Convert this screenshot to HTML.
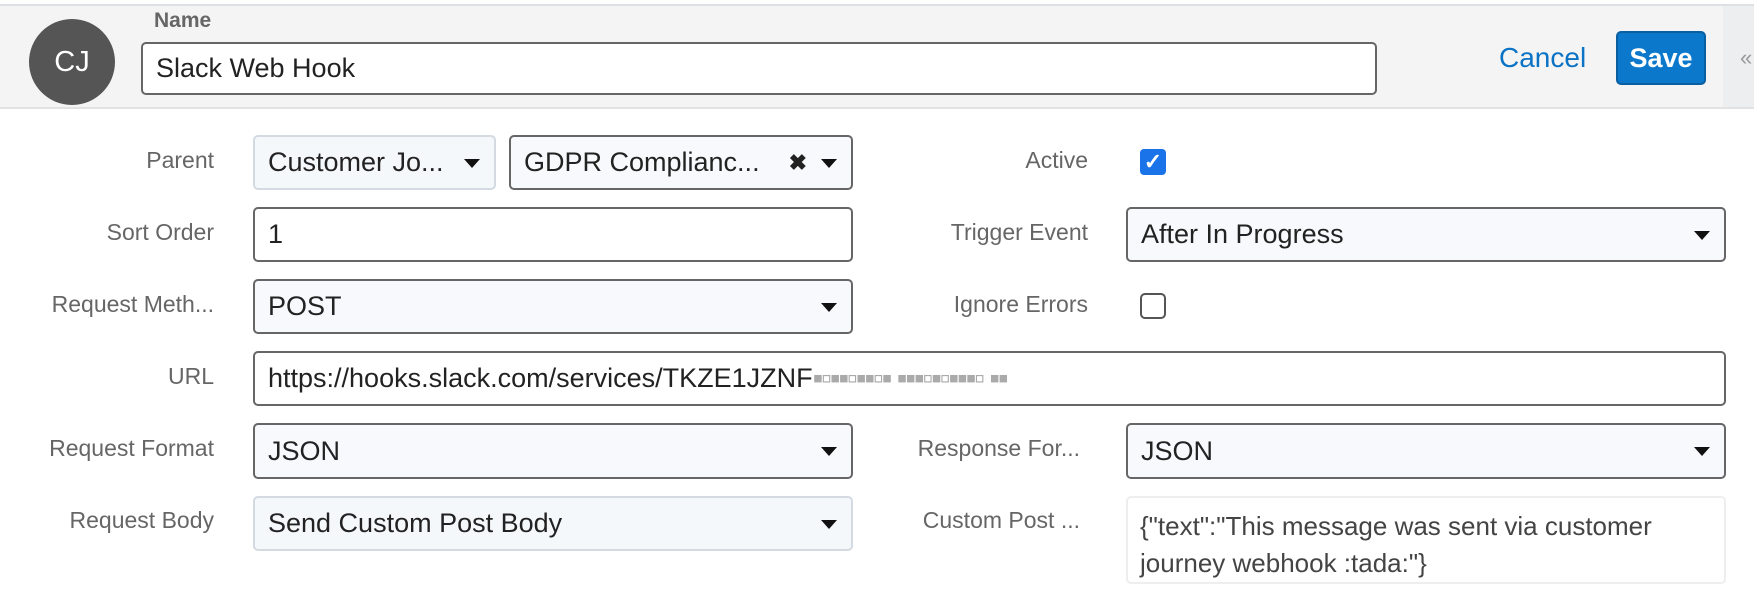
<!DOCTYPE html>
<html><head><style>
*{box-sizing:border-box;margin:0;padding:0}
body{width:1754px;height:602px;background:#fff;font-family:"Liberation Sans",sans-serif;position:relative;overflow:hidden}
.a{position:absolute}
.top{left:0;top:0;width:1754px;height:6px;background:#fff;border-bottom:2px solid #dde1e5}
.hdr{left:0;top:6px;width:1723px;height:103px;background:#f4f4f4;border-bottom:2px solid #e2e2e2}
.rs{left:1723px;top:6px;width:31px;height:103px;background:#eceeef;border-bottom:2px solid #e2e2e2}
.av{left:29px;top:19px;width:86px;height:86px;border-radius:50%;background:#555;color:#fff;font-size:29px;line-height:86px;text-align:center}
.in{border:2px solid #666;border-radius:5px;background:#fff;font-size:27px;color:#222;padding-left:13px;display:flex;align-items:center}
.sel{background:#f8f9fc}
.lite{border-color:#d3dae2;background:#f5f8fb}
.lbl{font-size:23px;color:#666;text-align:right;width:300px}
.arr{position:absolute;right:14px;top:50%;margin-top:-4px;width:0;height:0;border-left:8px solid transparent;border-right:8px solid transparent;border-top:9px solid #111}
</style></head><body>
<div class="a top"></div>
<div class="a hdr"></div>
<div class="a rs"></div>
<div class="a" style="left:1740px;top:45px;font-size:22px;color:#999">«</div>
<div class="a av">CJ</div>
<div class="a" style="left:154px;top:9px;font-size:21px;color:#666;font-weight:bold">Name</div>
<div class="a in" style="left:141px;top:42px;width:1236px;height:53px">Slack Web Hook</div>
<div class="a" style="left:1499px;top:42px;font-size:28px;color:#0b72c4">Cancel</div>
<div class="a" style="left:1616px;top:31px;width:90px;height:54px;background:#0b78cc;border:2px solid #0a5fa0;border-radius:5px;color:#fff;font-weight:bold;font-size:27px;text-align:center;line-height:50px">Save</div>

<div class="a lbl" style="left:-86px;top:147px">Parent</div>
<div class="a in sel lite" style="left:253px;top:135px;width:243px;height:55px">Customer Jo...<span class="arr"></span></div>
<div class="a in sel" style="left:509px;top:135px;width:344px;height:55px">GDPR Complianc...<span style="position:absolute;right:44px;font-size:22px;font-weight:bold">✖</span><span class="arr"></span></div>
<div class="a lbl" style="left:788px;top:147px">Active</div>
<div class="a" style="left:1140px;top:149px;width:26px;height:26px;border-radius:4px;background:#1a73e8;color:#fff;font-size:22px;text-align:center;line-height:26px;font-weight:bold">✓</div>

<div class="a lbl" style="left:-86px;top:219px">Sort Order</div>
<div class="a in" style="left:253px;top:207px;width:600px;height:55px">1</div>
<div class="a lbl" style="left:788px;top:219px">Trigger Event</div>
<div class="a in sel" style="left:1126px;top:207px;width:600px;height:55px">After In Progress<span class="arr"></span></div>

<div class="a lbl" style="left:-86px;top:291px">Request Meth...</div>
<div class="a in sel" style="left:253px;top:279px;width:600px;height:55px">POST<span class="arr"></span></div>
<div class="a lbl" style="left:788px;top:291px">Ignore Errors</div>
<div class="a" style="left:1140px;top:293px;width:26px;height:26px;border-radius:5px;border:2px solid #555;background:#fff"></div>

<div class="a lbl" style="left:-86px;top:363px">URL</div>
<div class="a in" style="left:253px;top:351px;width:1473px;height:55px">https://hooks.slack.com/services/TKZE1JZNF<span style="color:#aaa;font-size:30px;letter-spacing:-2px">▪▫▪▪▫▪▪▫▪ ▪▪▪▫▪▫▪▪▪▫ ▪▪</span></div>

<div class="a lbl" style="left:-86px;top:435px">Request Format</div>
<div class="a in sel" style="left:253px;top:423px;width:600px;height:56px">JSON<span class="arr"></span></div>
<div class="a lbl" style="left:780px;top:435px">Response For...</div>
<div class="a in sel" style="left:1126px;top:423px;width:600px;height:56px">JSON<span class="arr"></span></div>

<div class="a lbl" style="left:-86px;top:507px">Request Body</div>
<div class="a in sel lite" style="left:253px;top:496px;width:600px;height:55px">Send Custom Post Body<span class="arr"></span></div>
<div class="a lbl" style="left:780px;top:507px">Custom Post ...</div>
<div class="a" style="left:1126px;top:496px;width:600px;height:88px;border:2px solid #eee;border-radius:5px;font-size:26px;color:#444;padding:10px 12px;line-height:37px">{"text":"This message was sent via customer journey webhook :tada:"}</div>
</body></html>
